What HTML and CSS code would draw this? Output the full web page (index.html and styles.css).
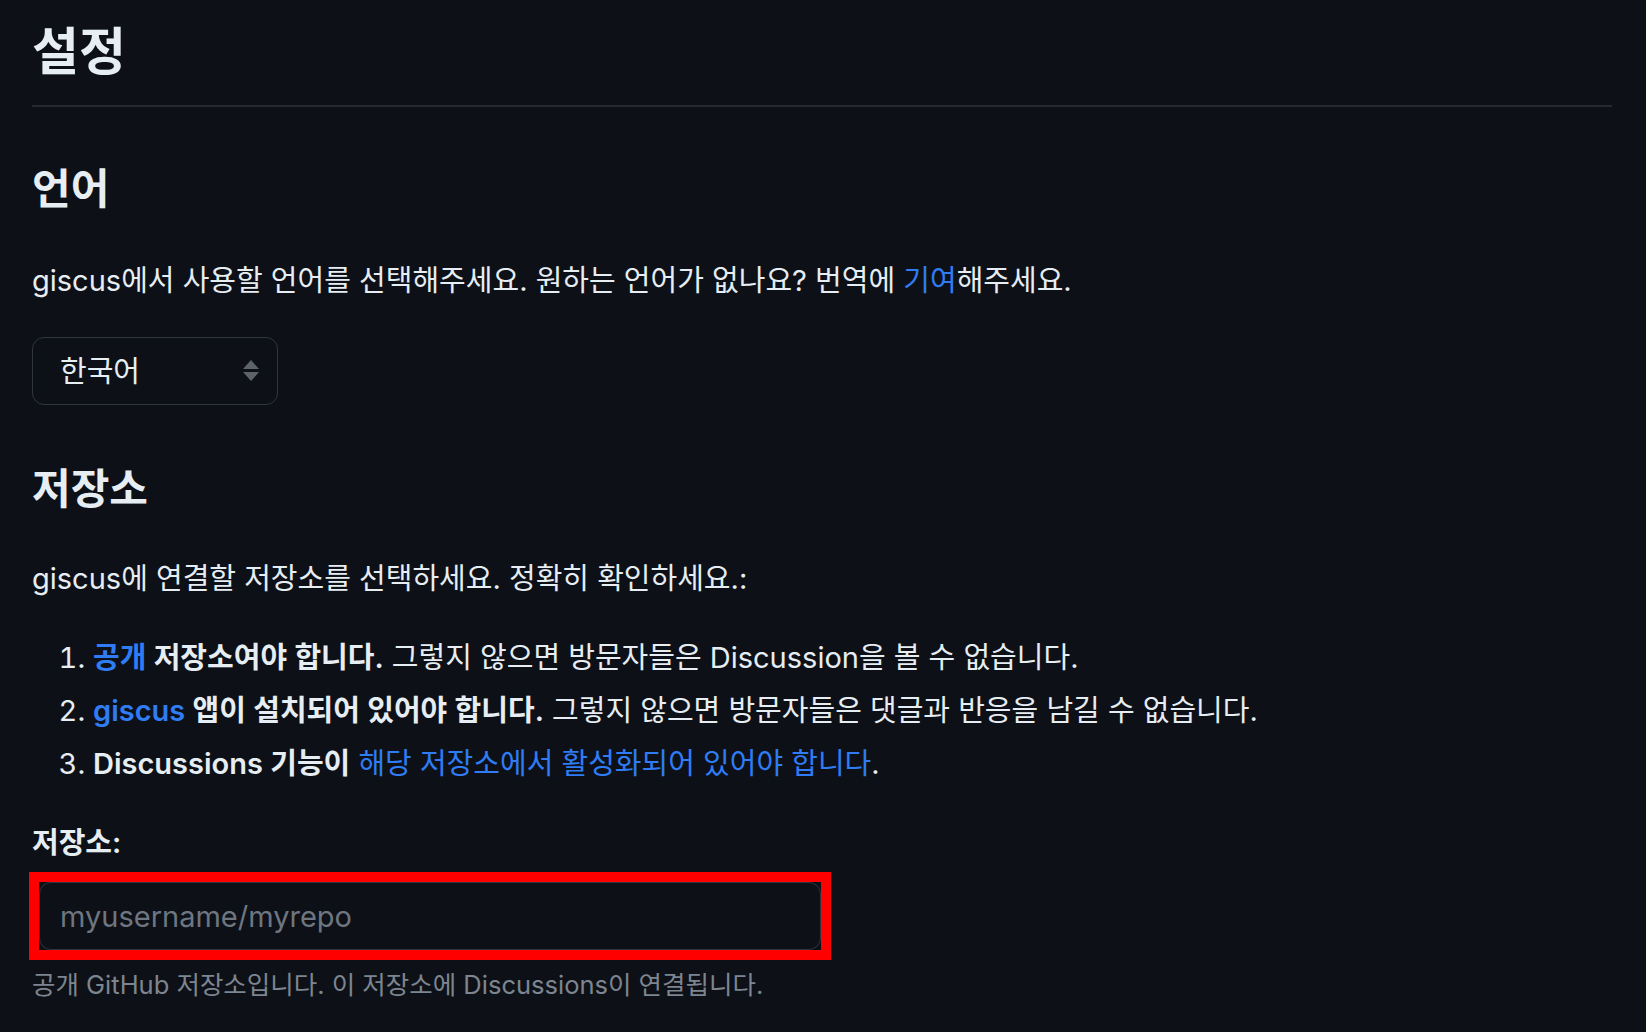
FILE: index.html
```html
<!DOCTYPE html>
<html lang="ko">
<head>
<meta charset="utf-8">
<title>설정</title>
<link rel="stylesheet" href="styles.css">
</head>
<body>
<main class="page">
  <h1 class="title">설정</h1>

  <h2 class="section">언어</h2>
  <p class="text">giscus에서 사용할 언어를 선택해주세요. 원하는 언어가 없나요? 번역에 <a class="link" href="#">기여</a>해주세요.</p>
  <div class="select">
    <span class="select-value">한국어</span>
    <svg class="select-arrows" width="16" height="22" viewBox="0 0 16 22"><path d="M8 0 L16 9 L0 9 Z M0 12 L16 12 L8 21 Z" fill="#5d636b"/></svg>
  </div>

  <h2 class="section section-repo">저장소</h2>
  <p class="text text-repo">giscus에 연결할 저장소를 선택하세요. 정확히 확인하세요.:</p>
  <ol class="rules">
    <li><strong><a class="link" href="#">공개</a> 저장소여야 합니다.</strong> 그렇지 않으면 방문자들은 Discussion을 볼 수 없습니다.</li>
    <li><strong><a class="link" href="#">giscus</a> 앱이 설치되어 있어야 합니다.</strong> 그렇지 않으면 방문자들은 댓글과 반응을 남길 수 없습니다.</li>
    <li><strong>Discussions 기능이</strong> <a class="link" href="#">해당 저장소에서 활성화되어 있어야 합니다</a>.</li>
  </ol>

  <label class="field-label" for="repo">저장소:</label>
  <div class="field-wrap">
    <input class="field" id="repo" type="text" placeholder="myusername/myrepo">
  </div>
  <p class="hint">공개 GitHub 저장소입니다. 이 저장소에 Discussions이 연결됩니다.</p>
</main>
</body>
</html>
```
FILE: styles.css
```css
html, body {
  margin: 0;
  padding: 0;
  background: #0d1117;
}

body {
  color: #e6edf3;
  font-family: Inter, "Noto Sans CJK KR", sans-serif;
  font-size: 29px;
  line-height: 1.5;
}

.page {
  padding: 0 34px 0 32px;
}

.title {
  margin: 0;
  padding: 17px 0 18px;
  font-size: 51px;
  line-height: 70px;
  font-weight: 600;
  border-bottom: 2px solid #262a30;
}

.section {
  margin: 53px 0 0;
  font-size: 42px;
  line-height: 58px;
  font-weight: 600;
}

.section-repo {
  margin-top: 55px;
}

.text {
  margin: 40px 0 0;
  line-height: 45px;
}

.text-repo {
  margin-top: 38px;
}

.link {
  color: #2f7cf4;
  text-decoration: none;
}

strong {
  font-weight: 600;
}

.select {
  margin-top: 34px;
  width: 246px;
  height: 68px;
  box-sizing: border-box;
  border: 1px solid #30363d;
  border-radius: 12px;
  display: flex;
  align-items: center;
  justify-content: space-between;
  padding: 0 18px 0 27px;
}

.select-value {
  line-height: 1;
}

.rules {
  margin: 34px 0 0;
  padding-left: 61px;
}

.rules li {
  line-height: 45px;
}

.rules li + li {
  margin-top: 8px;
}

.field-label {
  display: block;
  margin-top: 34px;
  font-weight: 600;
  line-height: 45px;
}

.field-wrap {
  margin: 17px 0 0 7px;
  width: 782px;
  outline: 10px solid #ff0000;
}

.field {
  display: block;
  width: 100%;
  height: 68px;
  box-sizing: border-box;
  margin: 0;
  padding: 0 20px;
  border: 1px solid #30363d;
  border-radius: 12px;
  background: #0d1117;
  color: #e6edf3;
  font: inherit;
  font-size: 29px;
}

.field::placeholder {
  color: #6e7681;
}

.hint {
  margin: 15px 0 0;
  color: #7d8590;
  font-size: 25.5px;
  line-height: 39px;
}
```
